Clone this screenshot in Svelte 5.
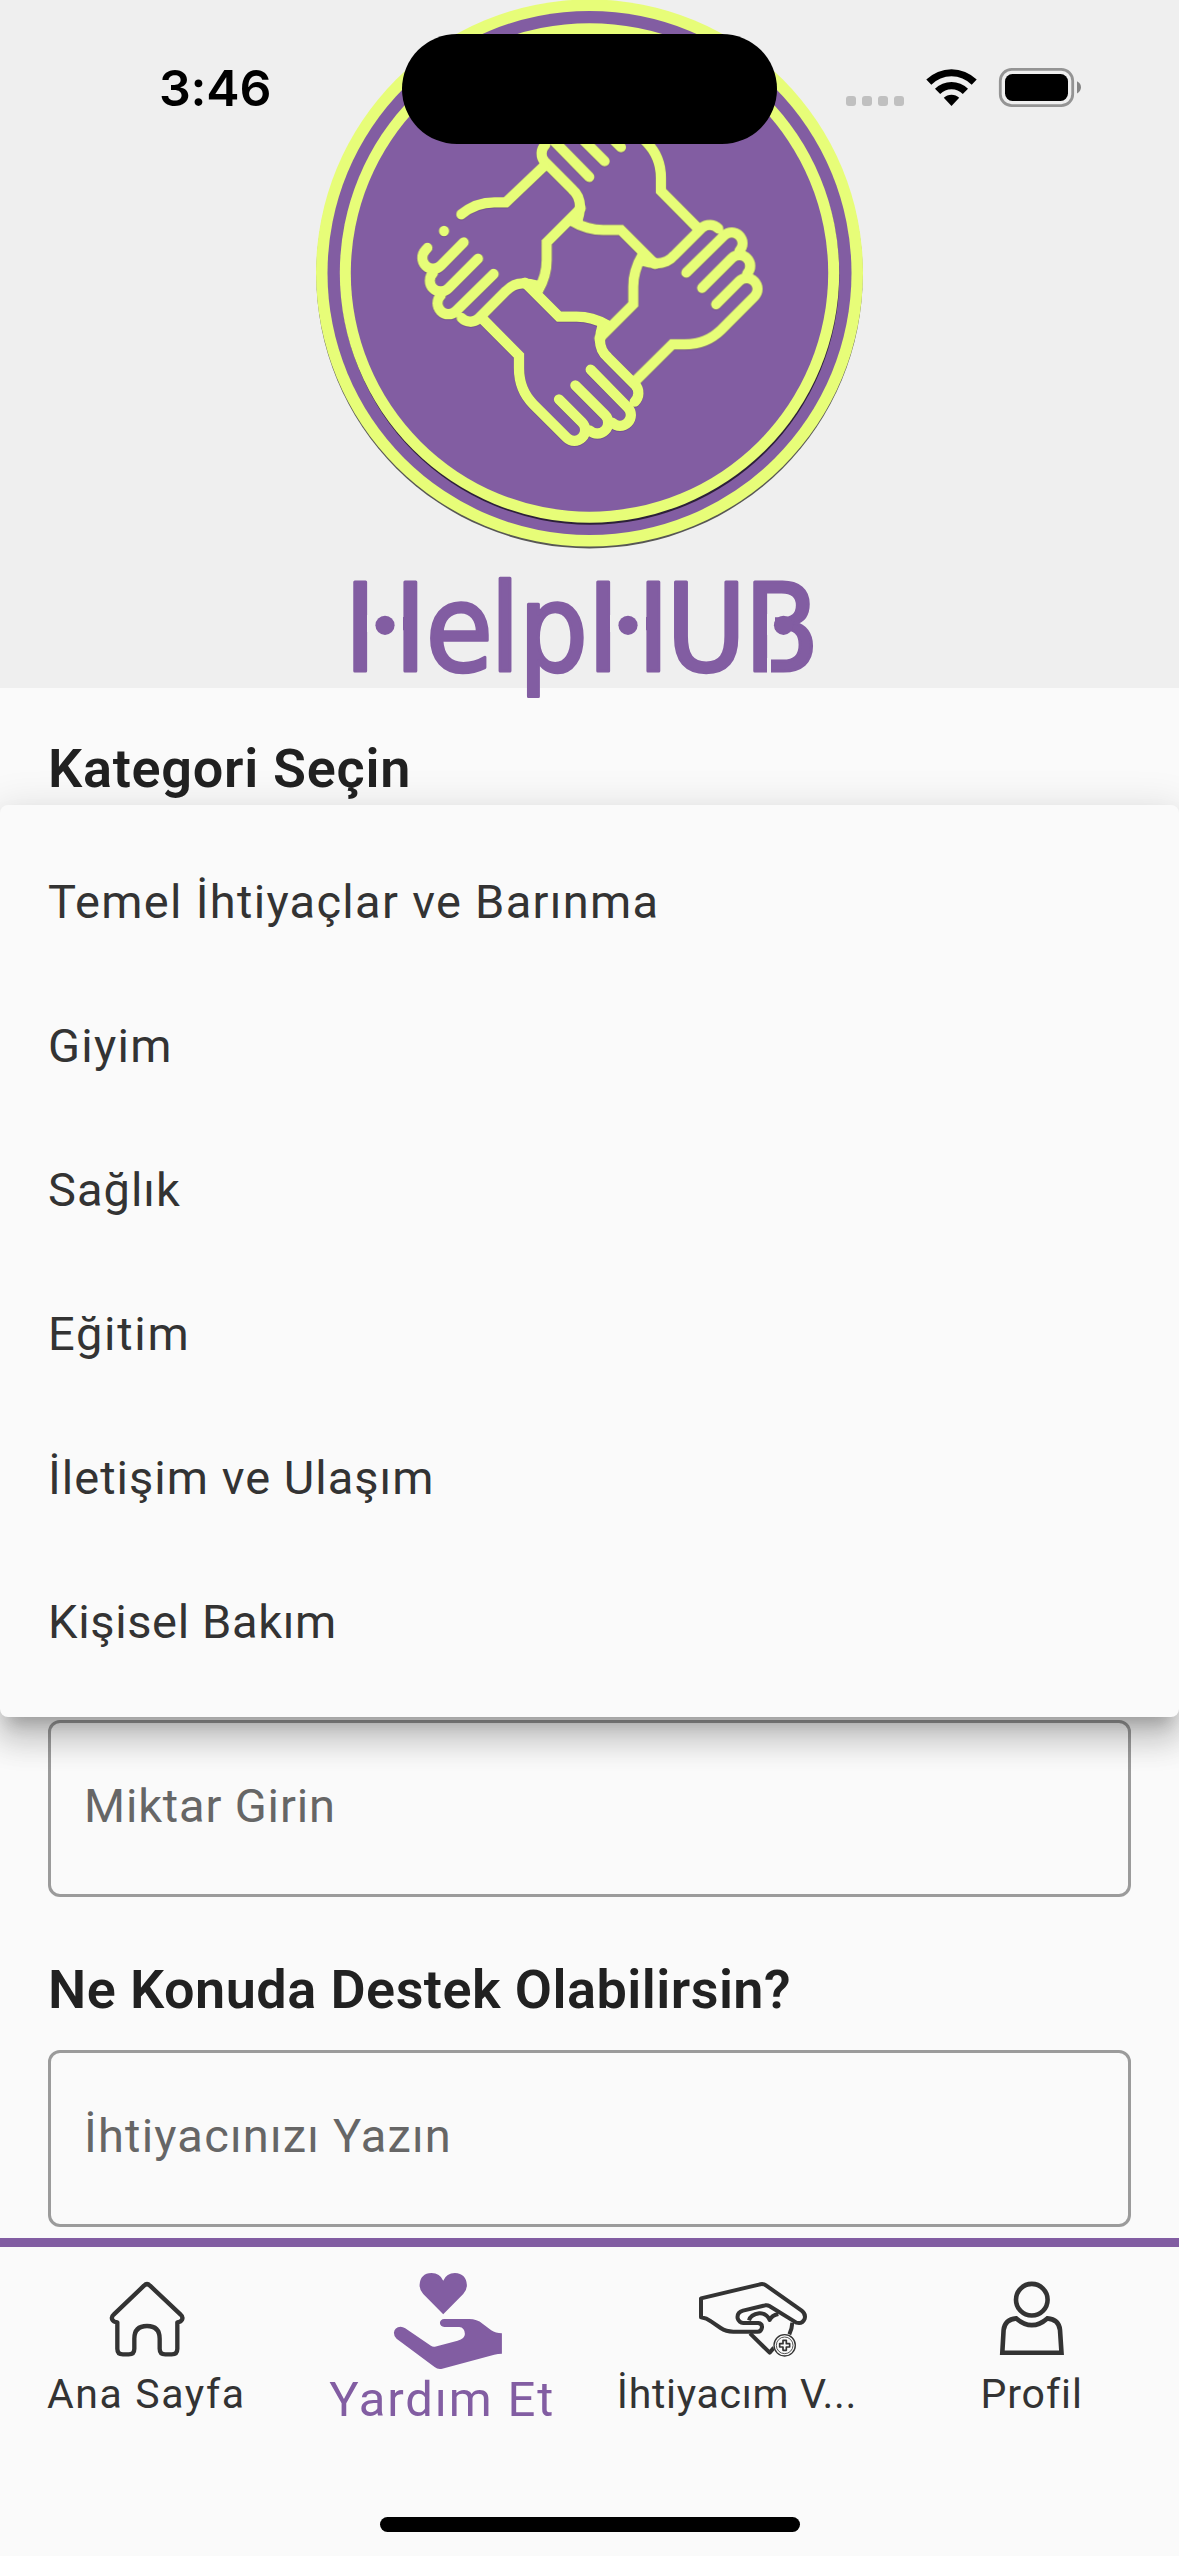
<script>
  const categories = [
    { label: 'Temel İhtiyaçlar ve Barınma', track: 'wide' },
    { label: 'Giyim', track: 'wide' },
    { label: 'Sağlık', track: 'mid' },
    { label: 'Eğitim', track: 'loose' },
    { label: 'İletişim ve Ulaşım', track: 'mid' },
    { label: 'Kişisel Bakım', track: 'tight' }
  ];
</script>

{#snippet hand()}
  <path d="M308 597 L417 707 V745 Q417 810 460 853 L560 953 A32 32 0 0 0 606 907 L537 838" />
  <path d="M629 931 A32 32 0 0 0 675 885 L586 796" />
  <path d="M697 908 A32 32 0 0 0 743 862 L632 749" />
  <path d="M764 845 A36 36 0 0 0 766 795 L683 712 Q660 690 660 662 Q660 640 668 615" />
  <path d="M435 488 L537 590 H590 Q638 590 680 615" />
{/snippet}

<div class="screen">
  <header>
    <svg class="logo" viewBox="0 0 1179 688" aria-label="HelpHUB">
      <circle cx="589.5" cy="275.2" r="273.2" fill="#3c3c38" opacity=".85" />
      <circle cx="589.5" cy="273" r="273.5" fill="#e7fd78" />
      <circle cx="589.5" cy="273" r="262" fill="#825da2" />
      <circle cx="590" cy="275.4" r="249.3" fill="#2c2038" />
      <circle cx="589.5" cy="273" r="249.7" fill="#e7fd78" />
      <circle cx="589.5" cy="273" r="238.7" fill="#825da2" />
      <g class="hands" transform="translate(380 120) scale(.33333)">
        {@render hand()}
        <g transform="rotate(-90 630 460)">{@render hand()}</g>
        <g transform="rotate(180 630 460)">{@render hand()}</g>
        <path d="M490 140 L378 247 H343 Q287 247 244 283 M192 333 h.1" />
        <path d="M142 384 L136 391 A32 32 0 0 0 183 436 L251 367" />
        <g transform="rotate(90 630 460)">
          <path d="M629 931 A32 32 0 0 0 675 885 L586 796" />
          <path d="M697 908 A32 32 0 0 0 743 862 L632 749" />
          <path d="M764 845 A36 36 0 0 0 766 795 L683 712 Q660 690 660 662 Q660 640 668 615" />
          <path d="M435 488 L537 590 H590 Q638 590 680 615" />
        </g>
      </g>
      <text class="wordmark" x="343.9 425.5 489.7 518.5 586.9 666 743.9" y="671">HelpHUB</text>
      <g fill="#efefef">
        <rect x="367" y="615" width="36" height="17" />
        <rect x="610" y="615" width="36" height="17" />
        <rect x="767" y="614" width="8" height="21" />
        <rect x="767" y="658" width="4" height="16" />
      </g>
      <g fill="#825da2">
        <circle cx="385" cy="625.3" r="9.6" />
        <circle cx="628" cy="625.3" r="9.6" />
        <circle cx="783.5" cy="625.3" r="9.6" />
      </g>
    </svg>
    <div class="status">
      <span class="time">3:46</span>
      <span class="island"></span>
      <svg class="signals" viewBox="0 0 280 100">
        <g fill="#c0c0c0">
          <rect x="26" y="56" width="10" height="10" rx="3" />
          <rect x="42" y="56" width="10" height="10" rx="3" />
          <rect x="58" y="56" width="10" height="10" rx="3" />
          <rect x="74" y="56" width="10" height="10" rx="3" />
        </g>
        <path d="M106.3 39.6 A36 36 0 0 1 156.7 39.6 L151.7 44.7 A28.5 28.5 0 0 0 111.3 44.7Z" />
        <path d="M115 48.7 A23.6 23.6 0 0 1 148 48.7 L142.8 53.9 A16 16 0 0 0 120.2 53.9Z" />
        <path d="M123.8 57.8 A11 11 0 0 1 139.2 57.8 L131.5 66Z" />
        <rect x="180.3" y="29.3" width="72.4" height="36.4" rx="11.5" fill="none" stroke="#949494" stroke-width="2.8" />
        <rect x="185" y="34" width="63" height="27" rx="7.5" />
        <path d="M257 41.3 Q261 43.5 261 47.3 Q261 51.2 257 53.4Z" fill="#858585" />
      </svg>
    </div>
  </header>

  <main>
    <h2 class="first">Kategori Seçin</h2>
    <div class="menu">
      {#each categories as c}
        <div class="item {c.track}">{c.label}</div>
      {/each}
    </div>
    <div class="fields">
      <div class="field">Miktar Girin</div>
      <h2 class="second">Ne Konuda Destek Olabilirsin?</h2>
      <div class="field spaced">İhtiyacınızı Yazın</div>
    </div>
  </main>

  <nav>
    <div class="tab home">
      <svg width="100" height="110" viewBox="-8 -18 300 330">
        <path class="line" stroke-width="13" d="M133 47 Q142 38 151 47 L243 134 Q251 141 247 149 Q244 155 233 157 V236 Q233 253 216 253 H197 Q180 253 180 236 V206 Q180 168 142 168 Q104 168 104 206 V236 Q104 253 87 253 H70 Q53 253 53 236 V157 Q41 155 38 149 Q34 141 42 134 Z" />
      </svg>
      <span>Ana Sayfa</span>
    </div>
    <div class="tab active">
      <svg width="136" height="110" viewBox="-17.7 0 408 330">
        <g fill="#825da2">
          <path d="M190 151 L130 90 Q119 79 119 63 Q121 28 155 27 Q180 27 190 50 Q200 27 225 27 Q259 29 261 63 Q261 79 250 90Z" />
          <path d="M193 165 H268 Q291 165 308 179 L334 199 Q347 208 366 208 V269 Q354 269 343 272 L187 314 Q174 317 164 309 L50 224 Q42 217 42 206 Q44 189 62 188 Q69 188 76 193 L153 245 Q158 249 165 248 L233 230 Q255 224 255 210 Q254 190 238 189 H193 Q181 188 180 177 Q181 166 193 165Z" />
        </g>
      </svg>
      <span>Yardım Et</span>
    </div>
    <div class="tab need">
      <svg width="130" height="110" viewBox="-54 -30 390 330">
        <g class="line" stroke-width="12">
          <path d="M33 73 L207 32 Q219 27 229 35 L335 110 Q348 120 344 134 Q337 151 319 146 L238 96 Q233 93 226 94 L159 110 Q140 116 143 133 Q147 146 160 147 H205 Q217 149 216 160 Q214 173 203 173 H130 Q108 173 92 162 L63 142 Q50 132 33 130Z" />
          <path d="M177 139 Q182 122 208 118 Q230 117 239 138 Q245 124 265 120 M307 146 Q306 166 298 181 M180 178 L239 236 L252 221" />
        </g>
        <circle cx="284" cy="214" r="34" fill="#fafafa" />
        <circle cx="284" cy="214" r="32" fill="none" stroke="#333" stroke-width="4" />
        <circle cx="284" cy="214" r="25" fill="none" stroke="#333" stroke-width="2.5" />
        <path d="M279 199 h10 v10 h10 v10 h-10 v10 h-10 v-10 h-10 v-10 h10Z" fill="none" stroke="#333" stroke-width="5" stroke-linejoin="round" />
      </svg>
      <span>İhtiyacım V...</span>
    </div>
    <div class="tab profile">
      <svg width="100" height="110" viewBox="0 0 100 110">
        <g class="line" stroke-width="4.6">
          <circle cx="49.8" cy="35.7" r="15.8" />
          <path class="sharp" d="M20.3 88.8 L21.6 66 Q22.8 55.5 34.3 54.4 Q49.8 68 65.3 54.4 Q77 55.5 78 66 L79.5 88.8Z" />
        </g>
      </svg>
      <span>Profil</span>
    </div>
    <i class="indicator"></i>
  </nav>
</div>

<style>
  :global(body) { margin: 0; background: #fafafa; }
  .screen {
    width: 1179px;
    height: 2556px;
    display: flex;
    flex-direction: column;
    overflow: hidden;
    background: #fafafa;
    color: #333;
    font-family: Roboto, sans-serif;
  }
  header { position: relative; height: 688px; background: #efefef; flex: none; }
  .logo { display: block; width: 1179px; height: 688px; overflow: visible; }
  .hands {
    fill: none;
    stroke: #e7fd78;
    stroke-width: 31;
    stroke-linecap: round;
    stroke-linejoin: miter;
    filter: drop-shadow(0 1px 1px rgba(40, 20, 60, .45));
  }
  .wordmark {
    font-family: 'DejaVu Sans Condensed', 'DejaVu Sans', sans-serif;
    font-size: 122px;
    fill: #825da2;
    stroke: #825da2;
    stroke-width: 3px;
    stroke-linejoin: round;
    text-rendering: geometricPrecision;
  }
  .status {
    position: absolute;
    inset: 0 0 auto;
    height: 178px;
    display: grid;
    grid-template-columns: 402px 375px 1fr;
    align-items: center;
  }
  .time {
    padding-left: 159px;
    margin-top: -2px;
    font: 600 50px/60px Inter, sans-serif;
    letter-spacing: -.2px;
    color: #000;
  }
  .island { height: 110px; border-radius: 55px; background: #000; }
  .signals { width: 280px; height: 100px; margin-left: 43px; margin-top: 2px; }
  main {
    position: relative;
    flex: 1;
    display: flex;
    flex-direction: column;
    padding: 49px 48px 11px;
    box-sizing: border-box;
  }
  h2 {
    margin: 0;
    font-size: 54px;
    line-height: 64px;
    font-weight: 600;
    color: #212121;
  }
  .first { letter-spacing: .72px; }
  .second { letter-spacing: .46px; margin: 61px 0 28px; }
  .menu {
    position: absolute;
    top: 117px;
    left: 0;
    right: 0;
    padding: 24px 48px;
    background: #fafafa;
    border-radius: 8px;
    box-shadow: 0 15px 15px -9px rgba(0, 0, 0, .2), 0 24px 30px 3px rgba(0, 0, 0, .14), 0 9px 42px 6px rgba(0, 0, 0, .12);
  }
  .item { font-size: 47px; line-height: 145px; height: 144px; }
  .wide { letter-spacing: 1.3px; }
  .mid { letter-spacing: 1.02px; }
  .loose { letter-spacing: 1.7px; }
  .tight { letter-spacing: .65px; }
  .fields { margin-top: auto; }
  .field {
    height: 171px;
    border: 3px solid #9b9b9b;
    border-radius: 12px;
    padding-left: 33px;
    font-size: 47px;
    line-height: 166px;
    letter-spacing: .85px;
    color: #666;
  }
  .spaced { letter-spacing: 1.2px; }
  nav {
    position: relative;
    height: 309px;
    border-top: 9px solid #825da2;
    display: grid;
    grid-template-columns: repeat(4, 1fr);
  }
  .tab {
    display: flex;
    flex-direction: column;
    align-items: center;
    padding-top: 17px;
    font-size: 41px;
    line-height: 40px;
    white-space: nowrap;
  }
  .tab svg { display: block; flex: none; overflow: visible; }
  .line { fill: none; stroke: #333; stroke-linejoin: round; }
  .sharp { stroke-linejoin: miter; }
  .home { letter-spacing: 1.6px; }
  .home span { margin-right: 2px; }
  .active { font-size: 49px; line-height: 52px; letter-spacing: 1.85px; color: #825da2; }
  .need { letter-spacing: .7px; }
  .profile { letter-spacing: .91px; }
  .indicator {
    position: absolute;
    left: 380px;
    bottom: 24px;
    width: 420px;
    height: 15px;
    border-radius: 8px;
    background: #000;
  }
</style>
